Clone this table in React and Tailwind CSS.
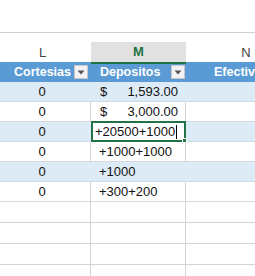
import React from "react";

const rows = [
  { l: "0", m: "money", amount: "1,593.00", band: true },
  { l: "0", m: "money", amount: "3,000.00", band: false },
  { l: "0", m: "+20500+1000", band: true, active: true },
  { l: "0", m: "+1000+1000", band: false },
  { l: "0", m: "+1000", band: true },
  { l: "0", m: "+300+200", band: false },
];

function FilterButton() {
  return (
    <div className="w-[14px] h-[14px] bg-[#f3f3f3] border border-[#c8c8c8] flex items-center justify-center">
      <svg width="8" height="5" viewBox="0 0 8 5">
        <path d="M0.5 0.5 L7.5 0.5 L4 4.5 Z" fill="#555" />
      </svg>
    </div>
  );
}

function DataRow({ row }) {
  const bg = row.band ? "bg-[#ddebf7]" : "bg-white";
  const line = row.band ? "border-[#ddebf7]" : "border-[#d4d4d4]";
  return (
    <div className={`grid grid-cols-[97px_95px_120px] h-[20px] border-b border-[#d0d9e4] ${bg}`}>
      <div className={`flex items-center justify-center border-r ${line}`}>{row.l}</div>
      {row.m === "money" ? (
        <div className={`flex items-center justify-between pl-[9px] pr-[7px] border-r ${line}`}>
          <span>$</span>
          <span>{row.amount}</span>
        </div>
      ) : row.active ? (
        <div className="relative bg-white border-2 border-[#217346] flex items-center pl-[2px] -my-px h-[21px]">
          <span>{row.m}</span>
          <span className="w-px h-[14px] bg-black ml-[1px]" />
          <span className="absolute -right-[3px] -bottom-[3px] w-[5px] h-[5px] bg-[#217346] border border-white" />
        </div>
      ) : (
        <div className={`flex items-center pl-[8px] border-r ${line}`}>{row.m}</div>
      )}
      <div />
    </div>
  );
}

export default function App() {
  return (
    <div className="w-[255px] h-[276px] overflow-hidden bg-white font-['Liberation_Sans',sans-serif] text-[13px] text-[#111]">
      <div className="h-[33px] border-b border-[#d0d0d0]" />
      <div className="h-[9px]" />
      <div className="ml-[-6px]">
        <div className="grid grid-cols-[97px_95px_120px] h-[20px] text-[#444]">
          <div className="flex items-center justify-center">L</div>
          <div className="flex items-center justify-center bg-[#e1e1e1] border-b-2 border-[#217346] font-bold text-[#217346]">
            M
          </div>
          <div className="flex items-center justify-center">N</div>
        </div>
        <div className="grid grid-cols-[97px_95px_120px] h-[20px] bg-[#5b9bd5] text-white font-bold text-[12.5px]">
          <div className="flex items-center justify-end pr-[3px] gap-[3px]">
            <span>Cortesias</span>
            <FilterButton />
          </div>
          <div className="flex items-center justify-between pl-[9px] pr-[1px]">
            <span>Depositos</span>
            <FilterButton />
          </div>
          <div className="flex items-center pl-[28px] whitespace-nowrap">Efectivo</div>
        </div>
        {rows.map((row, i) => (
          <DataRow key={i} row={row} />
        ))}
        {[0, 1, 2, 3].map((i) => (
          <div key={i} className="grid grid-cols-[97px_95px_120px] h-[21px] border-b border-[#d4d4d4]">
            <div className="border-r border-[#d4d4d4]" />
            <div className="border-r border-[#d4d4d4]" />
            <div />
          </div>
        ))}
      </div>
    </div>
  );
}
